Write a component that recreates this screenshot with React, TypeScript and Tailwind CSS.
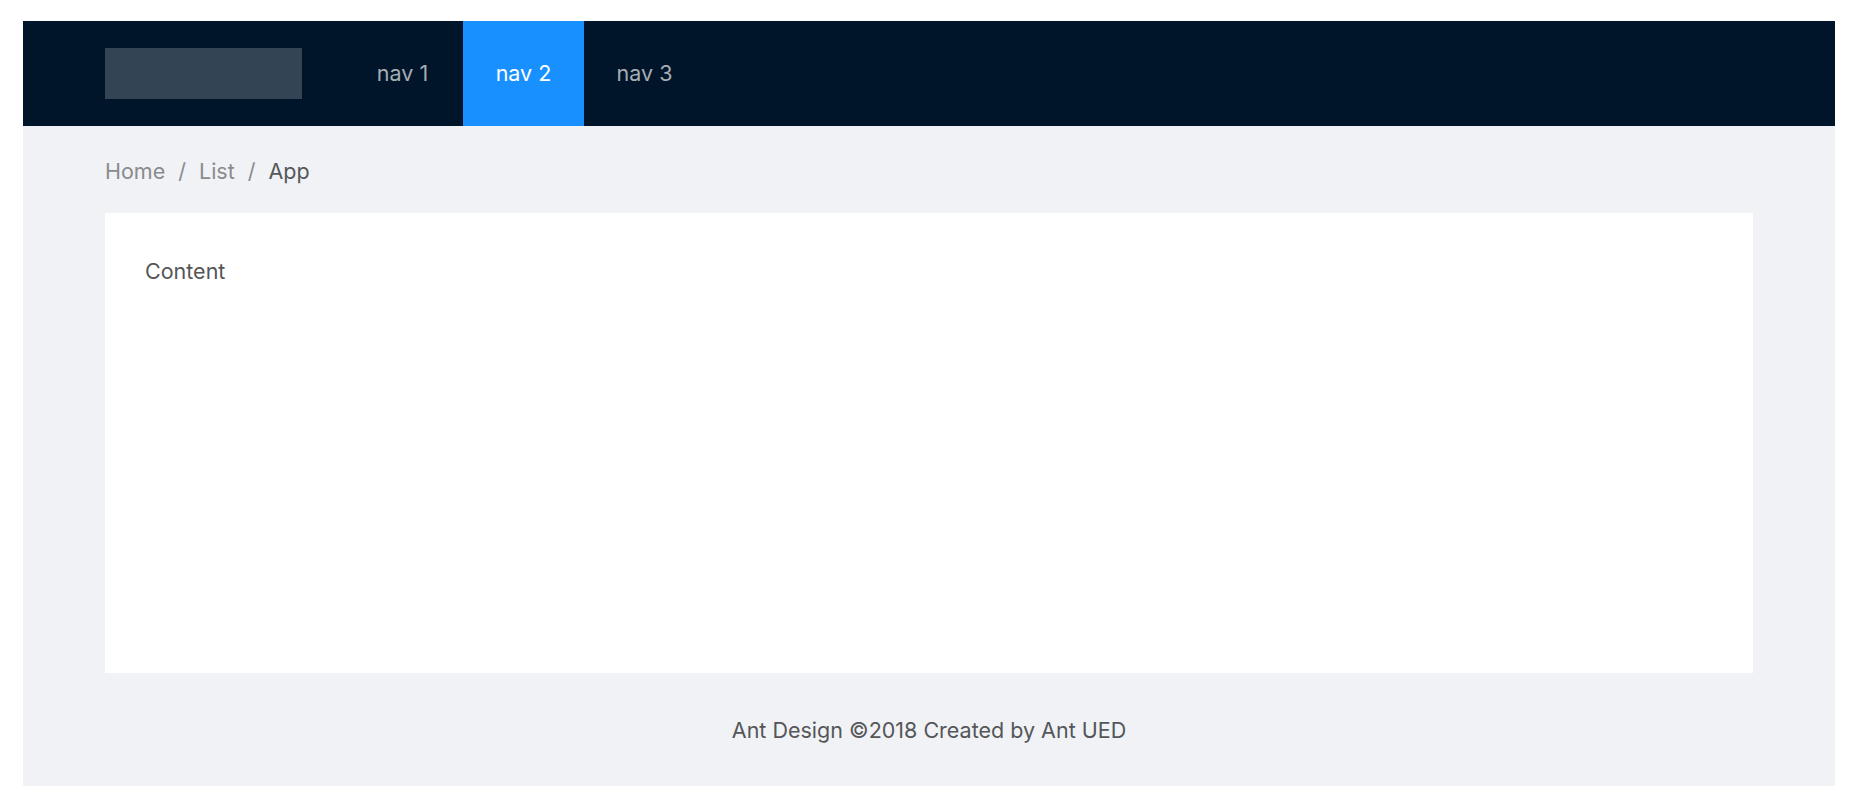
import React from "react";

export default function App() {
  const font = { fontFamily: "Inter, 'Noto Sans', sans-serif" };
  return (
    <div className="w-[1856px] h-[806px] bg-white pt-[21px] pl-[23px] pr-[21px] pb-[20px]" style={font}>
      <div className="flex flex-col h-full bg-[#f0f2f5]">
        <header className="h-[105px] bg-[#001529] flex items-center pl-[82px] shrink-0">
          <div className="w-[197px] h-[51px] bg-[#334454]" />
          <nav className="flex h-full ml-[40px]">
            <div className="h-full w-[121px] flex items-center justify-center text-[21.5px] text-[#a6adb4]">nav 1</div>
            <div className="h-full w-[121px] flex items-center justify-center text-[21.5px] text-white bg-[#1890ff]">nav 2</div>
            <div className="h-full w-[121px] flex items-center justify-center text-[21.5px] text-[#a6adb4]">nav 3</div>
          </nav>
        </header>
        <main className="flex flex-col px-[82px]">
          <div className="h-[87px] pt-[4px] flex items-center text-[21.5px]">
            <span className="text-[#8a8b8e]">Home</span>
            <span className="text-[#8a8b8e] mx-[13px]">/</span>
            <span className="text-[#8a8b8e]">List</span>
            <span className="text-[#8a8b8e] mx-[13px]">/</span>
            <span className="text-[#555659]">App</span>
          </div>
          <div className="h-[460px] bg-white px-[40px] pt-[42px]">
            <div className="text-[21.5px] leading-[33px] text-[#555659]">Content</div>
          </div>
        </main>
        <footer className="flex-1 flex items-center justify-center pt-[2px] px-[82px] text-[21.5px] text-[#555659]">
          Ant Design ©2018 Created by Ant UED
        </footer>
      </div>
    </div>
  );
}
